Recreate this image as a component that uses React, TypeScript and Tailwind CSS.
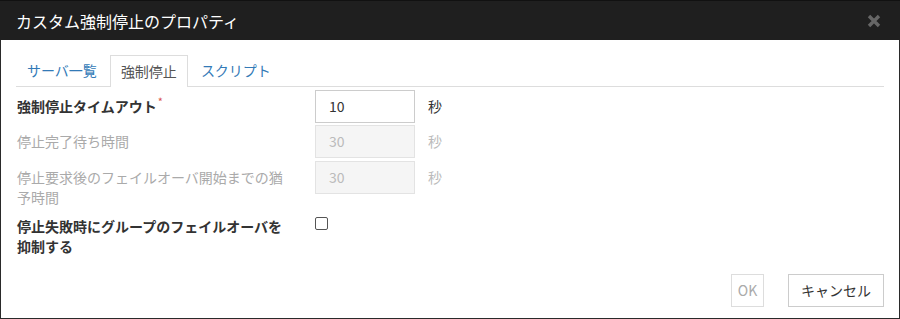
import React from 'react';

const font = { fontFamily: '"Noto Sans CJK JP", "Noto Sans", sans-serif' };

function CloseIcon() {
  return (
    <svg width="14" height="14" viewBox="0 0 14 14" className="block">
      <path d="M2 2 L12 12 M12 2 L2 12" stroke="#666" strokeWidth="3.4" strokeLinecap="butt" />
    </svg>
  );
}

interface FieldRowProps {
  label: React.ReactNode;
  value: string;
  disabled?: boolean;
  className?: string;
}

function FieldRow({ label, value, disabled, className }: FieldRowProps) {
  return (
    <div className={`flex items-start ${className ?? ''}`}>
      <div
        className={`w-[299px] pl-px pr-[26px] pt-[6px] text-[14px] leading-5 ${
          disabled ? 'text-[#aaa]' : 'text-[#333] font-bold'
        }`}
      >
        {label}
      </div>
      <div
        className={`w-[100px] h-[33px] border flex items-center px-[13px] text-[14px] ${
          disabled
            ? 'bg-[#f5f5f5] border-[#e3e3e3] text-[#bbb]'
            : 'bg-white border-[#ccc] text-[#333]'
        }`}
      >
        {value}
      </div>
      <div className={`ml-[13px] pt-[6px] text-[14px] leading-5 ${disabled ? 'text-[#bbb]' : 'text-[#333]'}`}>
        秒
      </div>
    </div>
  );
}

export default function App() {
  return (
    <div className="w-[900px] h-[319px] flex flex-col bg-white" style={font}>
      <div className="h-[40px] bg-[#1f1f1f] border-t border-[#111] flex items-center justify-between pl-[16px] pr-[19px]">
        <span className="text-white text-[16px] leading-none">カスタム強制停止のプロパティ</span>
        <CloseIcon />
      </div>

      <div className="flex-1 flex flex-col border-x border-b border-[#2a2a2a] px-[15px] pt-[15px] pb-[11px]">
        <div className="flex h-[32px] border-b border-[#ddd] text-[14px]">
          <div className="mr-[2px] px-[11px] flex items-center text-[#337ab7]">サーバ一覧</div>
          <div className="mr-[2px] px-[10px] flex items-center text-[#555] bg-white border border-b-0 border-[#ddd] h-[32px]">
            強制停止
          </div>
          <div className="px-[11px] flex items-center text-[#337ab7]">スクリプト</div>
        </div>

        <div className="flex flex-col mt-[3px]">
          <FieldRow
            label={
              <>
                強制停止タイムアウト
                <span className="text-[#d9534f] text-[11px] font-normal relative -top-[6px] ml-px">*</span>
              </>
            }
            value="10"
          />
          <FieldRow label="停止完了待ち時間" value="30" disabled className="mt-[2px]" />
          <FieldRow label="停止要求後のフェイルオーバ開始までの猶予時間" value="30" disabled className="mt-[3px]" />
          <div className="flex items-start mt-[3px]">
            <div className="w-[299px] pl-px pr-[26px] pt-[6px] text-[14px] leading-5 text-[#333] font-bold">
              停止失敗時にグループのフェイルオーバを抑制する
            </div>
            <div className="mt-[7px] w-[13px] h-[13px] border border-[#555] rounded-[2px] bg-white" />
          </div>
        </div>

        <div className="mt-auto flex justify-end gap-[24px] text-[14px]">
          <div className="h-[33px] w-[33px] border border-[#ddd] text-[#aaa] flex items-center justify-center">
            OK
          </div>
          <div className="h-[33px] w-[96px] border border-[#ccc] text-[#333] flex items-center justify-center">
            キャンセル
          </div>
        </div>
      </div>
    </div>
  );
}
